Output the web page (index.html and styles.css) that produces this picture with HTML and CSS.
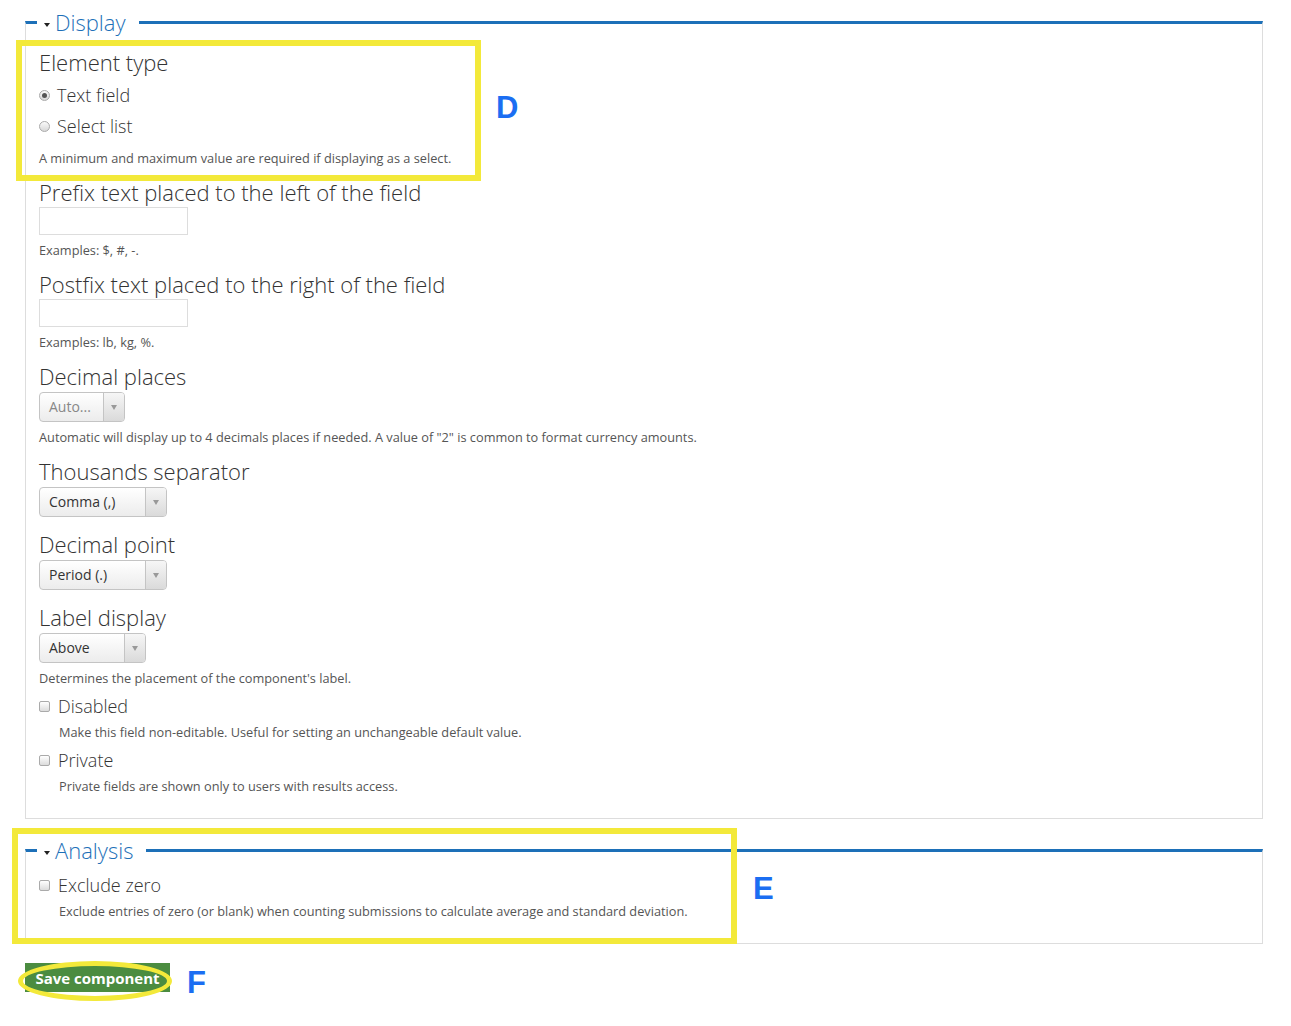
FILE: index.html
```html
<!DOCTYPE html>
<html lang="en">
<head>
  <meta charset="UTF-8">
  <title>Number component - Display settings</title>
  <link rel="stylesheet" href="styles.css">
</head>
<body>

<div class="page">

  <fieldset class="section">
    <legend><span class="caret"></span>Display</legend>

    <div class="form-item first">
      <div class="label">Element type</div>
      <div class="option"><span class="radio checked"></span>Text field</div>
      <div class="option"><span class="radio"></span>Select list</div>
      <div class="description">A minimum and maximum value are required if displaying as a select.</div>
    </div>

    <div class="form-item">
      <div class="label">Prefix text placed to the left of the field</div>
      <div class="text-input"></div>
      <div class="description">Examples: $, #, -.</div>
    </div>

    <div class="form-item">
      <div class="label">Postfix text placed to the right of the field</div>
      <div class="text-input"></div>
      <div class="description">Examples: lb, kg, %.</div>
    </div>

    <div class="form-item">
      <div class="label">Decimal places</div>
      <div class="select select-auto disabled"><span class="value">Auto...</span><span class="arrow"></span></div>
      <div class="description">Automatic will display up to 4 decimals places if needed. A value of "2" is common to format currency amounts.</div>
    </div>

    <div class="form-item">
      <div class="label">Thousands separator</div>
      <div class="select select-wide"><span class="value">Comma (,)</span><span class="arrow"></span></div>
    </div>

    <div class="form-item">
      <div class="label">Decimal point</div>
      <div class="select select-wide"><span class="value">Period (.)</span><span class="arrow"></span></div>
    </div>

    <div class="form-item">
      <div class="label">Label display</div>
      <div class="select select-mid"><span class="value">Above</span><span class="arrow"></span></div>
      <div class="description">Determines the placement of the component's label.</div>
    </div>

    <div class="form-item check">
      <div class="option"><span class="checkbox"></span>Disabled</div>
      <div class="description indented">Make this field non-editable. Useful for setting an unchangeable default value.</div>
    </div>

    <div class="form-item check">
      <div class="option"><span class="checkbox"></span>Private</div>
      <div class="description indented">Private fields are shown only to users with results access.</div>
    </div>
  </fieldset>

  <fieldset class="section">
    <legend><span class="caret"></span>Analysis</legend>

    <div class="form-item check first">
      <div class="option"><span class="checkbox"></span>Exclude zero</div>
      <div class="description indented">Exclude entries of zero (or blank) when counting submissions to calculate average and standard deviation.</div>
    </div>
  </fieldset>

  <div class="actions">
    <button class="save">Save component</button>
    <span class="ring"></span>
    <span class="mark mark-f">F</span>
  </div>

  <!-- annotation boxes drawn over the form -->
  <div class="highlight highlight-d"></div>
  <div class="highlight highlight-e"></div>
  <span class="mark mark-d">D</span>
  <span class="mark mark-e">E</span>

</div>

</body>
</html>
```

FILE: styles.css
```css
body {
  margin: 0;
  font-family: 'Open Sans', 'Noto Sans', sans-serif;
  color: #333;
  background-color: #fff;
}

.page {
  position: relative;
  width: 1238px;
  padding: 7px 28px 40px 25px;
}

.section {
  margin: 0;
  padding: 7px 13px 25px 13px;
  border: 1px solid #ddd;
  border-top: 3px solid #1d70b8;
}

.section + .section {
  margin-top: 16px;
}

legend {
  margin-left: -2px;
  padding: 0 13px 0 7px;
  font-size: 22px;
  font-weight: 300;
  line-height: 30px;
  color: #1d70b8;
}

.caret {
  display: inline-block;
  width: 0;
  height: 0;
  margin-right: 5px;
  vertical-align: middle;
  border-top: 4px solid #222;
  border-left: 3.5px solid transparent;
  border-right: 3.5px solid transparent;
}

.form-item {
  margin-top: 13px;
}

.form-item.first {
  margin-top: 4px;
}

.form-item.check {
  margin-top: 9px;
}

.form-item.check.first {
  margin-top: 1px;
}

.label {
  font-size: 22px;
  font-weight: 300;
  line-height: 28px;
  color: #333;
}

.option {
  display: flex;
  align-items: center;
  margin-top: 7px;
  font-size: 18px;
  font-weight: 300;
  line-height: 24px;
  color: #333;
}

.check .option {
  margin-top: 0;
}

.radio {
  width: 9px;
  height: 9px;
  margin-right: 7px;
  border: 1px solid #aaa;
  border-radius: 50%;
  background: linear-gradient(#fafafa, #d8d8d8);
  position: relative;
}

.radio.checked::after {
  content: '';
  position: absolute;
  top: 2px;
  left: 2px;
  width: 5px;
  height: 5px;
  border-radius: 50%;
  background-color: #555;
}

.checkbox {
  width: 9px;
  height: 9px;
  margin-right: 8px;
  border: 1px solid #aaa;
  border-radius: 2px;
  background: linear-gradient(#fff, #dcdcdc);
}

.description {
  margin-top: 8px;
  font-size: 12.75px;
  line-height: 14px;
  color: #555;
}

.option + .description {
  margin-top: 13px;
}

.check .option + .description {
  margin-top: 7px;
}

.description.indented {
  padding-left: 20px;
}

.text-input {
  width: 147px;
  height: 26px;
  margin-top: 1px;
  border: 1px solid #ddd;
  background-color: #fff;
}

.select {
  display: flex;
  height: 28px;
  margin-top: 2px;
  border: 1px solid #c4c4c4;
  border-radius: 4px;
  background: linear-gradient(#fff, #ececec);
  font-size: 14px;
  color: #333;
  overflow: hidden;
}

.select .value {
  flex: 1;
  padding-left: 9px;
  line-height: 28px;
}

.select .arrow {
  width: 20px;
  border-left: 1px solid #c4c4c4;
  background: linear-gradient(#f6f6f6, #dadada);
  position: relative;
}

.select .arrow::after {
  content: '';
  position: absolute;
  top: 12px;
  left: 7px;
  border-top: 5px solid #999;
  border-left: 3px solid transparent;
  border-right: 3px solid transparent;
}

.select-auto {
  width: 84px;
}

.select.disabled {
  color: #888;
}

.select-wide {
  width: 126px;
}

.select-mid {
  width: 105px;
}

.actions {
  position: relative;
  margin-top: 19px;
  height: 29px;
}

.save {
  display: block;
  width: 145px;
  height: 29px;
  padding: 0;
  border: none;
  background-color: #4b8c40;
  color: #fff;
  font-family: 'Open Sans', sans-serif;
  font-size: 15px;
  font-weight: 700;
}

.ring {
  position: absolute;
  left: -7px;
  top: -2px;
  width: 144px;
  height: 30px;
  border: 5px solid #f3e93a;
  border-radius: 50%;
}

.highlight {
  position: absolute;
  border: 6px solid #f3e93a;
}

.highlight-d {
  left: 16px;
  top: 40px;
  width: 453px;
  height: 129px;
}

.highlight-e {
  left: 12px;
  top: 828px;
  width: 713px;
  height: 104px;
}

.mark {
  position: absolute;
  font-family: 'Liberation Sans', Arial, sans-serif;
  font-size: 31px;
  font-weight: 700;
  line-height: 1;
  color: #1b6ef2;
}

.mark-d {
  left: 496px;
  top: 92px;
}

.mark-e {
  left: 753px;
  top: 873px;
}

.mark-f {
  left: 162px;
  top: 4px;
}
```
